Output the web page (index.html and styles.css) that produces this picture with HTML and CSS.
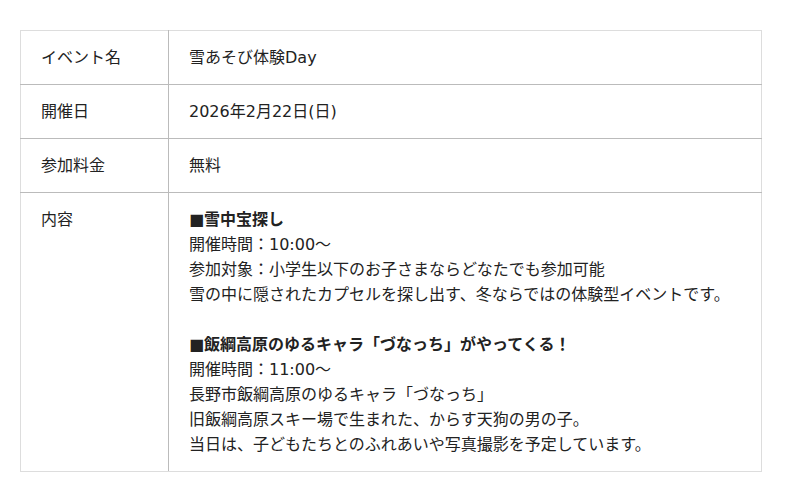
FILE: index.html
```html
<!DOCTYPE html>
<html lang="ja">
<head>
<meta charset="utf-8">
<link rel="stylesheet" href="styles.css">
</head>
<body>
<table class="info">
  <tr>
    <th>イベント名</th>
    <td>雪あそび体験Day</td>
  </tr>
  <tr>
    <th>開催日</th>
    <td>2026年2月22日(日)</td>
  </tr>
  <tr>
    <th>参加料金</th>
    <td>無料</td>
  </tr>
  <tr class="last">
    <th>内容</th>
    <td>
      <b>■雪中宝探し</b><br>
      開催時間：10:00～<br>
      参加対象：小学生以下のお子さまならどなたでも参加可能<br>
      雪の中に隠されたカプセルを探し出す、冬ならではの体験型イベントです。<br>
      <br>
      <b>■飯綱高原のゆるキャラ「づなっち」がやってくる！</b><br>
      開催時間：11:00～<br>
      長野市飯綱高原のゆるキャラ「づなっち」<br>
      旧飯綱高原スキー場で生まれた、からす天狗の男の子。<br>
      当日は、子どもたちとのふれあいや写真撮影を予定しています。
    </td>
  </tr>
</table>
</body>
</html>
```
FILE: styles.css
```css
html, body {
  margin: 0;
  padding: 0;
  background: #fff;
}
body {
  padding: 30px 38px 0 20px;
  font-family: "DejaVu Sans", "Noto Sans CJK JP", sans-serif;
  font-size: 16px;
  line-height: 25px;
  color: #222;
}
.info {
  width: 742px;
  border-collapse: collapse;
  border: 1px solid #ddd;
}
.info th,
.info td {
  padding: 14px 20px;
  text-align: left;
  vertical-align: top;
  font-weight: normal;
  border-bottom: 1px solid #bbb;
}
.info th {
  width: 107px;
  border-right: 1px solid #bbb;
}
.info tr.last th,
.info tr.last td {
  border-bottom: 1px solid #ddd;
}
.info b {
  font-weight: bold;
}
```
